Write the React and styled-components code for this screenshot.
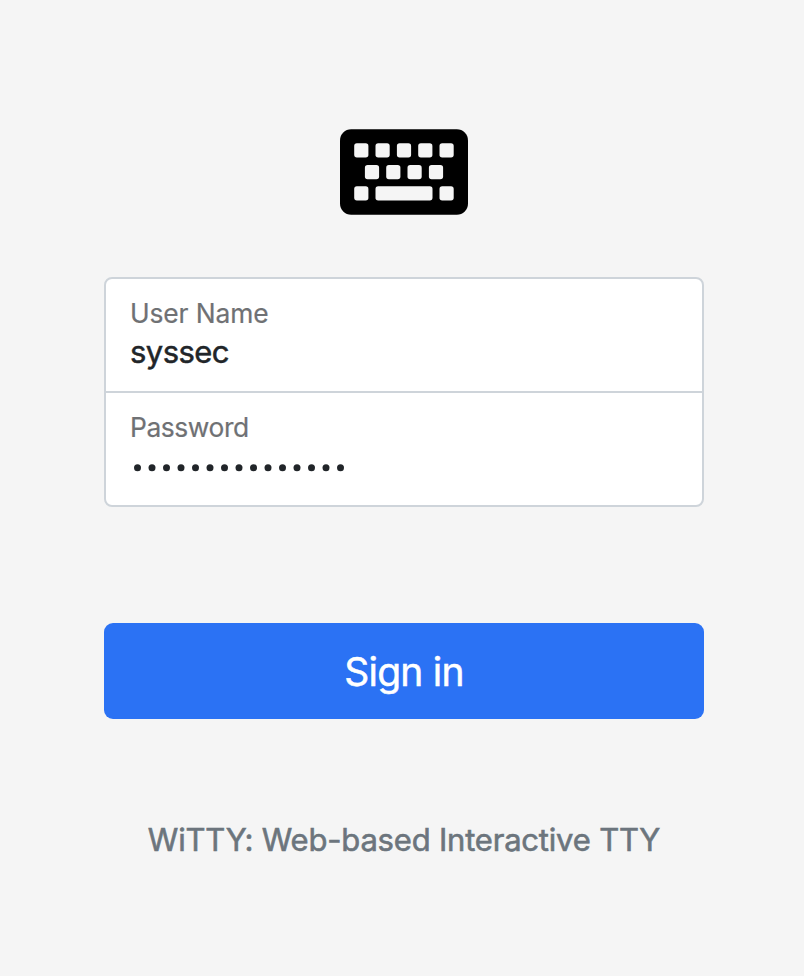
import React from 'react';
import styled, { createGlobalStyle } from 'styled-components';

const Global = createGlobalStyle`
  * { box-sizing: border-box; }
  body {
    margin: 0;
    background: #f5f5f5;
    font-family: Inter, "Liberation Sans", sans-serif;
    color: #212529;
  }
`;

const Page = styled.main`
  height: 976px;
  padding: 128px 100px 0 104px;
  overflow: hidden;
`;

const Form = styled.form`
  display: flex;
  flex-direction: column;
  align-items: stretch;
`;

const Logo = styled.svg`
  display: block;
  width: 128px;
  height: 88px;
  margin: 0 auto 61px;
`;

const Fields = styled.div`
  height: 230px;
  display: grid;
  grid-template-rows: 112px 112px;
  row-gap: 2px;
  border: 2px solid #ced4da;
  border-radius: 8px;
  background: linear-gradient(#ced4da, #ced4da) 0 112px / 100% 2px no-repeat #fff;
`;

const Field = styled.label`
  display: flex;
  flex-direction: column;
  padding: 17px 24px 0;
`;

const Label = styled.span`
  font-size: 26.4px;
  line-height: 34px;
  letter-spacing: ${(p) => p.$spacing || '0'};
  color: #6f7174;
  -webkit-text-stroke: 0.2px currentColor;
`;

const Input = styled.input`
  width: 100%;
  height: 40px;
  margin-top: 2px;
  padding: 0;
  border: 0;
  outline: 0;
  background: transparent;
  font: 400 31px/40px Inter, "Liberation Sans", sans-serif;
  letter-spacing: -0.55px;
  color: #212529;
  -webkit-text-stroke: 0.5px currentColor;
`;

const Dots = styled.svg`
  display: block;
  width: 220px;
  height: 12px;
  margin-top: 18px;
  fill: #212529;
`;

const SubmitButton = styled.button`
  height: 96px;
  margin: 116px 0 0;
  padding: 2px 0 0;
  border: 0;
  border-radius: 9px;
  background: #2b72f4;
  color: #fff;
  font: 400 39px/60px Inter, "Liberation Sans", sans-serif;
  letter-spacing: -0.8px;
  -webkit-text-stroke: 0.5px currentColor;
`;

const Footer = styled.p`
  margin: 97px 0 0;
  text-align: center;
  white-space: nowrap;
  font-size: 31px;
  line-height: 48px;
  letter-spacing: -0.2px;
  color: #6c757d;
  -webkit-text-stroke: 0.6px currentColor;
`;

const keys = [
  [14.2, 15.3], [35.5, 15.3], [56.9, 15.3], [78.2, 15.3], [99.5, 15.3],
  [24.9, 37], [46.2, 37], [67.5, 37], [88.9, 37],
  [14.2, 58.2], [99.5, 58.2],
];

export default function App() {
  return (
    <Page>
      <Global />
      <Form onSubmit={(e) => e.preventDefault()}>
        <Logo viewBox="0 0 128 88" aria-label="Keyboard">
          <rect y="1.2" width="128" height="85.6" rx="11.2" />
          <g fill="#f5f5f5">
            {keys.map(([x, y]) => (
              <rect key={`${x}-${y}`} x={x} y={y} width="14.2" height="14.2" rx="2.7" />
            ))}
            <rect x="35.5" y="58.2" width="57" height="14.2" rx="2.7" />
          </g>
        </Logo>
        <Fields>
          <Field>
            <Label $spacing="-0.12px">User Name</Label>
            <Input defaultValue="syssec" spellCheck={false} />
          </Field>
          <Field>
            <Label $spacing="-0.42px">Password</Label>
            <Dots viewBox="0 0 220 12" aria-label="Password entered">
              {Array.from({ length: 15 }, (_, i) => (
                <circle key={i} cx={7.5 + i * 14.5} cy="5.7" r="3.5" />
              ))}
            </Dots>
          </Field>
        </Fields>
        <SubmitButton type="submit">Sign in</SubmitButton>
        <Footer>WiTTY: Web-based Interactive TTY</Footer>
      </Form>
    </Page>
  );
}
